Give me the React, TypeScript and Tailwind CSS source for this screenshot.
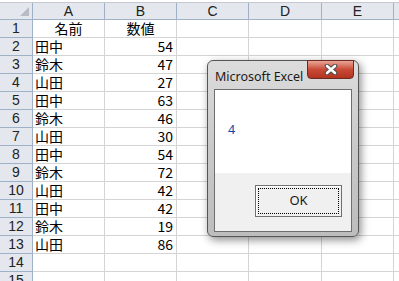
import React from 'react'

const rows: [string, string][] = [
  ['田中', '54'],
  ['鈴木', '47'],
  ['山田', '27'],
  ['田中', '63'],
  ['鈴木', '46'],
  ['山田', '30'],
  ['田中', '54'],
  ['鈴木', '72'],
  ['山田', '42'],
  ['田中', '42'],
  ['鈴木', '19'],
  ['山田', '86'],
]

const cols = ['A', 'B', 'C', 'D', 'E']
const colW = ['w-[72px]', 'w-[72px]', 'w-[72px]', 'w-[73px]', 'w-[72px]']

const jp = { fontFamily: '"Noto Sans CJK JP", "Liberation Sans", sans-serif' }
const ui = { fontFamily: '"Noto Sans", "Liberation Sans", sans-serif' }
const num = { fontFamily: '"Liberation Sans", sans-serif' }

function Row({ n, name, val }: { n: number; name?: string; val?: string }) {
  return (
    <div className="flex h-[18px]">
      <div className="w-[33px] shrink-0 bg-[#e4e8ee] border-r border-b border-[#9fb1c6] text-[14px] leading-[17px] text-center text-[#222]" style={num}>
        {n}
      </div>
      <div className="w-[72px] shrink-0 border-r border-b border-[#d4d4d4] text-[14px] leading-[17px] pl-[2px] text-black">
        {name}
      </div>
      <div className="w-[72px] shrink-0 border-r border-b border-[#d4d4d4] text-[14px] leading-[17px] pr-[3px] text-right text-black">
        {val}
      </div>
      <div className="w-[72px] shrink-0 border-r border-b border-[#d4d4d4]" />
      <div className="w-[73px] shrink-0 border-r border-b border-[#d4d4d4]" />
      <div className="w-[72px] shrink-0 border-r border-b border-[#d4d4d4]" />
      <div className="w-[20px] shrink-0 border-b border-[#d4d4d4]" />
    </div>
  )
}

function Dialog() {
  return (
    <div className="absolute left-[207px] top-[60px] w-[152px] h-[177px] rounded-[6px] border border-[#555] bg-gradient-to-b from-[#dcdcdc] via-[#c9c9c9] to-[#bdbdbd] shadow-[2px_3px_8px_rgba(0,0,0,0.45)]">
      <div className="flex h-[28px] items-start justify-between">
        <div className="pl-[7px] pt-[7px] text-[12.5px] text-[#1a1a1a]" style={ui}>
          Microsoft Excel
        </div>
        <div className="mr-[4px] mt-[-1px] w-[47px] h-[19px] rounded-b-[4px] border border-[#6b2a22] bg-gradient-to-b from-[#e8a597] via-[#c94a36] to-[#b23420] flex items-center justify-center">
          <svg width="14" height="11" viewBox="0 0 14 11">
            <path d="M3 2 L11 9 M11 2 L3 9" stroke="#4a4a4a" strokeWidth="4.5" strokeLinecap="round" />
            <path d="M3 2 L11 9 M11 2 L3 9" stroke="#fff" strokeWidth="2.6" strokeLinecap="round" />
          </svg>
        </div>
      </div>
      <div className="mx-[6px] border border-[#6e6e6e] bg-[#f0f0f0]">
        <div className="h-[83px] bg-white pl-[13px] pt-[31px] text-[12.5px] text-[#0b4aa6]" style={ui}>
          4
        </div>
        <div className="h-[58px] flex items-start justify-end pr-[9px] pt-[12px]">
          <div className="w-[87px] h-[32px] border border-[#707070] bg-[#f0f0f0] p-[2px] shadow-[inset_1px_1px_0_#fff]">
            <div className="h-full border border-dotted border-black flex items-center justify-center text-[13px] text-[#1a1a1a]" style={ui}>
              OK
            </div>
          </div>
        </div>
      </div>
    </div>
  )
}

export default function App() {
  return (
    <div className="relative w-[399px] h-[281px] overflow-hidden bg-white" style={jp}>
      <div className="h-[3px] border-b border-[#c5cad2] bg-white" />
      <div className="flex h-[17px]">
        <div className="w-[33px] shrink-0 bg-[#e4e8ee] border-r border-b border-[#9fb1c6] relative">
          <div className="absolute right-[3px] bottom-[3px] w-0 h-0 border-l-[9px] border-l-transparent border-b-[9px] border-b-[#b7bcc4]" />
        </div>
        {cols.map((c, i) => (
          <div
            key={c}
            className={`${colW[i]} shrink-0 bg-[#e4e8ee] border-r border-b border-[#9fb1c6] text-center text-[14px] leading-[16px] text-[#222]`}
            style={num}
          >
            {c}
          </div>
        ))}
        <div className="w-[20px] shrink-0 bg-[#e4e8ee] border-b border-[#9fb1c6]" />
      </div>
      <div className="flex h-[18px]">
        <div className="w-[33px] shrink-0 bg-[#e4e8ee] border-r border-b border-[#9fb1c6] text-[14px] leading-[17px] text-center text-[#222]" style={num}>1</div>
        <div className="w-[72px] shrink-0 border-r border-b border-[#d4d4d4] text-[14px] leading-[17px] text-center">名前</div>
        <div className="w-[72px] shrink-0 border-r border-b border-[#d4d4d4] text-[14px] leading-[17px] text-center">数値</div>
        <div className="w-[72px] shrink-0 border-r border-b border-[#d4d4d4]" />
        <div className="w-[73px] shrink-0 border-r border-b border-[#d4d4d4]" />
        <div className="w-[72px] shrink-0 border-r border-b border-[#d4d4d4]" />
        <div className="w-[20px] shrink-0 border-b border-[#d4d4d4]" />
      </div>
      {rows.map((r, i) => (
        <Row key={i} n={i + 2} name={r[0]} val={r[1]} />
      ))}
      <Row n={14} />
      <Row n={15} />
      <Dialog />
    </div>
  )
}
